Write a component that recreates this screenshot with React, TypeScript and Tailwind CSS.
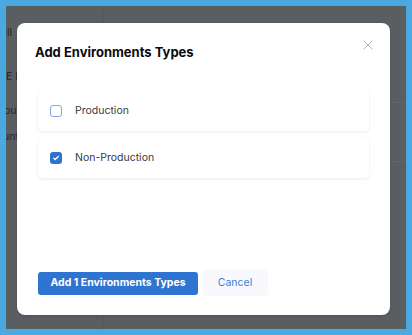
import React, { useState } from 'react';

const font = { fontFamily: 'Inter, "Noto Sans", sans-serif' };

interface EnvType {
  id: string;
  label: string;
  checked: boolean;
}

function Checkbox({ checked }: { checked: boolean }) {
  if (checked) {
    return (
      <span className="flex h-[12px] w-[12px] items-center justify-center rounded-[3px] bg-[#2f73d1]">
        <svg viewBox="0 0 12 12" className="h-[8px] w-[8px]" fill="none" stroke="white" strokeWidth={2} strokeLinecap="round" strokeLinejoin="round">
          <path d="M2.5 6.2l2.3 2.2L9.5 3.8" />
        </svg>
      </span>
    );
  }
  return <span className="block h-[12px] w-[12px] rounded-[3px] border border-[#7da6e3] bg-white" />;
}

export default function App() {
  const [types, setTypes] = useState<EnvType[]>([
    { id: 'prod', label: 'Production', checked: false },
    { id: 'nonprod', label: 'Non-Production', checked: true },
  ]);
  const count = types.filter(t => t.checked).length;

  const toggle = (id: string) =>
    setTypes(prev => prev.map(t => (t.id === id ? { ...t, checked: !t.checked } : t)));

  return (
    <div className="h-[335px] w-[412px] bg-[#4aa9df] p-[6px]" style={font}>
      <div className="relative h-[323px] w-[400px] overflow-hidden bg-[#5a5d62]">
        {/* page behind the overlay (dimmed) */}
        <div className="flex h-full text-[10.5px] leading-[14px] text-[#25272b]">
          <div className="flex w-[98px] flex-col border-r border-[#55585d] pt-[20px]">
            <div className="pl-[1px]">ll</div>
            <div className="mt-[30px]">E F</div>
            <div className="ml-[-2px] mt-[20px]">oup</div>
            <div className="ml-[-3px] mt-[12px]">unt</div>
          </div>
          <div className="flex flex-1 flex-col">
            <div className="h-[97px] border-b border-[#63666b]" />
            <div className="h-[59px] border-b border-[#63666b]" />
          </div>
        </div>

        {/* dialog */}
        <div className="absolute left-[11px] top-[17px] flex h-[292px] w-[373px] flex-col rounded-[8px] bg-white shadow-sm">
          <div className="flex items-start justify-between pl-[18px] pr-[16px] pt-[20px]">
            <h2 className="text-[13px] font-bold leading-[18px] text-[#0b0b0d]">Add Environments Types</h2>
            <button className="mt-[-4px] flex h-[12px] w-[12px] items-center justify-center">
              <svg viewBox="0 0 12 12" className="h-[10px] w-[10px]" stroke="#a9aac0" strokeWidth={1.1} fill="none">
                <path d="M1 1l10 10M11 1L1 11" />
              </svg>
            </button>
          </div>

          <div className="mt-[29px] flex flex-col gap-[6px] px-[21px]">
            {types.map(t => (
              <div
                key={t.id}
                onClick={() => toggle(t.id)}
                className="flex h-[41px] cursor-pointer items-center gap-[13px] rounded-[4px] bg-white pl-[12px] shadow-[0_1px_3px_rgba(0,0,0,0.08),0_0_1px_rgba(0,0,0,0.06)]"
              >
                <Checkbox checked={t.checked} />
                <span className="text-[10.5px] text-[#383946]">{t.label}</span>
              </div>
            ))}
          </div>

          <div className="mt-auto flex items-center gap-[4px] pb-[19px] pl-[21px]">
            <button className="flex h-[23px] w-[160px] items-center justify-center rounded-[3px] bg-[#2f74d0] text-[10.5px] font-bold text-white">
              Add {count} Environments Types
            </button>
            <button className="flex h-[26px] w-[66px] items-center justify-center rounded-[4px] bg-[#f8f9fc] text-[10.5px] text-[#3d7ed6]">
              Cancel
            </button>
          </div>
        </div>
      </div>
    </div>
  );
}
